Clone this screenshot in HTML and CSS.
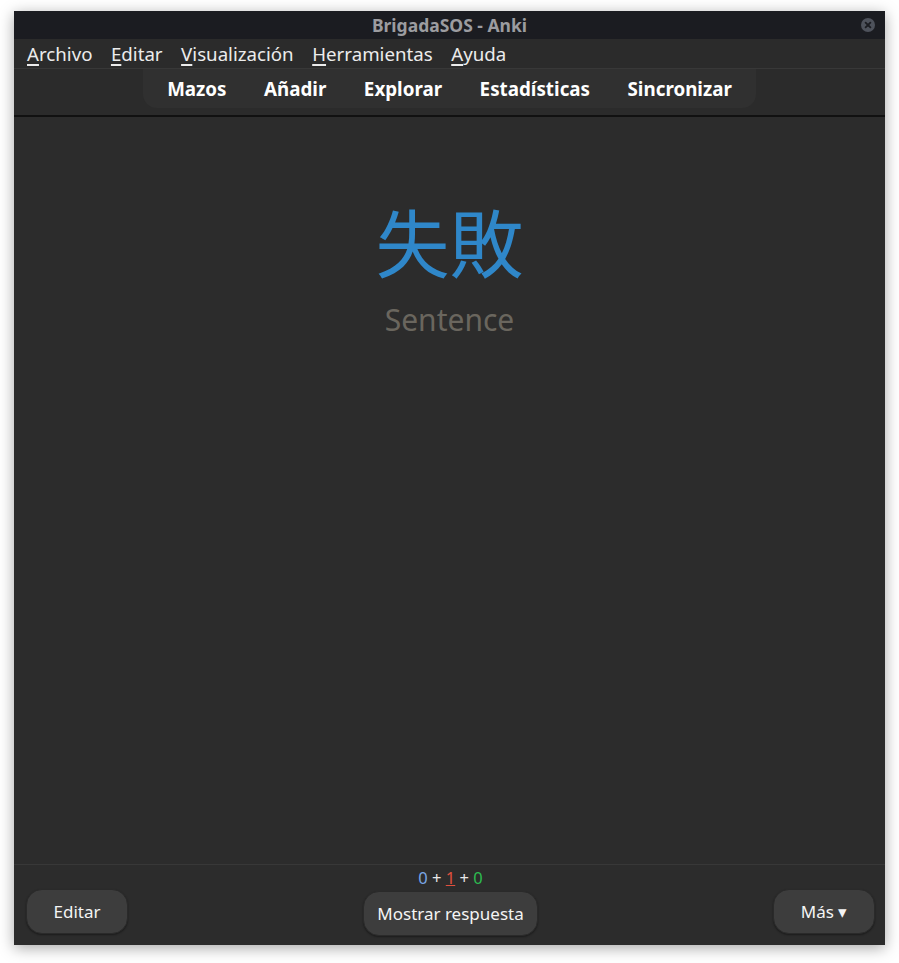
FILE: index.html
```html
<!DOCTYPE html>
<html lang="es">
<head>
<meta charset="utf-8">
<title>BrigadaSOS - Anki</title>
<link rel="stylesheet" href="styles.css">
</head>
<body>
<div class="window">
  <div class="titlebar">
    <span class="title">BrigadaSOS - Anki</span>
    <span class="close">
      <svg width="14" height="14" viewBox="0 0 14 14"><circle cx="7" cy="7" r="7" fill="#4e525b"/><path d="M4.6 4.6 L9.4 9.4 M9.4 4.6 L4.6 9.4" stroke="#1b1c21" stroke-width="1.8" stroke-linecap="round"/></svg>
    </span>
  </div>
  <div class="menubar">
    <span class="menu"><u>A</u>rchivo</span>
    <span class="menu"><u>E</u>ditar</span>
    <span class="menu"><u>V</u>isualización</span>
    <span class="menu"><u>H</u>erramientas</span>
    <span class="menu"><u>A</u>yuda</span>
  </div>
  <div class="toolbar">
    <div class="pill">
      <span class="tb">Mazos</span>
      <span class="tb">Añadir</span>
      <span class="tb">Explorar</span>
      <span class="tb">Estadísticas</span>
      <span class="tb">Sincronizar</span>
    </div>
  </div>
  <div class="main">
    <div class="kanji">失敗</div>
    <div class="sentence">Sentence</div>
  </div>
  <div class="bottom">
    <div class="btn-col left"><button class="btn">Editar</button></div>
    <div class="center-col">
      <div class="counts"><span class="c-new">0</span> + <span class="c-lrn">1</span> + <span class="c-rev">0</span></div>
      <button class="btn wide">Mostrar respuesta</button>
    </div>
    <div class="btn-col right"><button class="btn">Más ▾</button></div>
  </div>
</div>
</body>
</html>
```
FILE: styles.css
```css
html, body {
  margin: 0;
  padding: 0;
  background: #ffffff;
}
body {
  font-family: "Noto Sans", "Noto Sans CJK JP", sans-serif;
  padding: 11px 14px 18px 14px;
}
.window {
  width: 871px;
  height: 934px;
  display: flex;
  flex-direction: column;
  background: #2c2c2c;
  box-shadow: 0 3px 14px rgba(0,0,0,0.35);
}
.titlebar {
  height: 28px;
  background: #1b1c21;
  display: flex;
  align-items: center;
  justify-content: center;
  position: relative;
}
.title {
  color: #9c9ca0;
  font-weight: 700;
  font-size: 17.5px;
}
.close {
  position: absolute;
  right: 10px;
  top: 7px;
  width: 14px;
  height: 14px;
  display: block;
}
.close svg { display: block; }
.menubar {
  background: #2b2b2b;
  border-bottom: 1px solid #383838;
  display: flex;
  align-items: center;
  padding-left: 13px;
  gap: 18.5px;
  box-sizing: border-box;
  height: 30px;
}
.menu {
  color: #ececec;
  font-size: 18.7px;
}
.menu u {
  text-decoration-thickness: 1.5px;
  text-underline-offset: 3px;
}
.toolbar {
  height: 46px;
  background: #2b2b2b;
  border-bottom: 2px solid #111111;
  display: flex;
  justify-content: center;
  align-items: flex-start;
}
.pill {
  height: 39px;
  width: 613px;
  box-sizing: border-box;
  background: #303030;
  border-radius: 0 0 14px 14px;
  display: flex;
  align-items: center;
  justify-content: center;
  gap: 37.5px;
  padding-top: 0;
}
.tb {
  color: #ffffff;
  font-weight: 700;
  font-size: 18.8px;
}
.main {
  flex: 1;
  background: #2c2c2c;
  display: flex;
  flex-direction: column;
  align-items: center;
  padding-top: 79px;
}
.kanji {
  font-family: "Noto Sans CJK JP", sans-serif;
  color: #2f87c9;
  font-size: 74px;
  line-height: 88px;
}
.sentence {
  color: #6a665e;
  font-size: 30px;
  line-height: 40px;
  margin-top: 16px;
}
.bottom {
  height: 81px;
  border-top: 1px solid #383838;
  box-sizing: border-box;
  background: #2c2c2c;
  display: flex;
  justify-content: space-between;
  padding: 0 10px 0 12px;
}
.btn-col {
  padding-top: 24px;
}
.center-col {
  display: flex;
  flex-direction: column;
  align-items: center;
  padding-top: 2px;
}
.counts {
  font-size: 16.5px;
  color: #e8e8e8;
  line-height: 22px;
  height: 24px;
}
.c-new { color: #7aa6e6; }
.c-lrn { color: #e0503e; text-decoration: underline; }
.c-rev { color: #2dbb50; }
.btn {
  font-family: "Noto Sans", sans-serif;
  font-size: 17px;
  color: #f4f4f4;
  background: #3d3d3d;
  border: 1px solid #2a2a2a;
  border-radius: 16px;
  width: 102px;
  height: 45px;
  box-shadow: 0 1px 2px rgba(0,0,0,0.4);
  padding: 0;
}
.btn.wide {
  width: 175px;
}
```
